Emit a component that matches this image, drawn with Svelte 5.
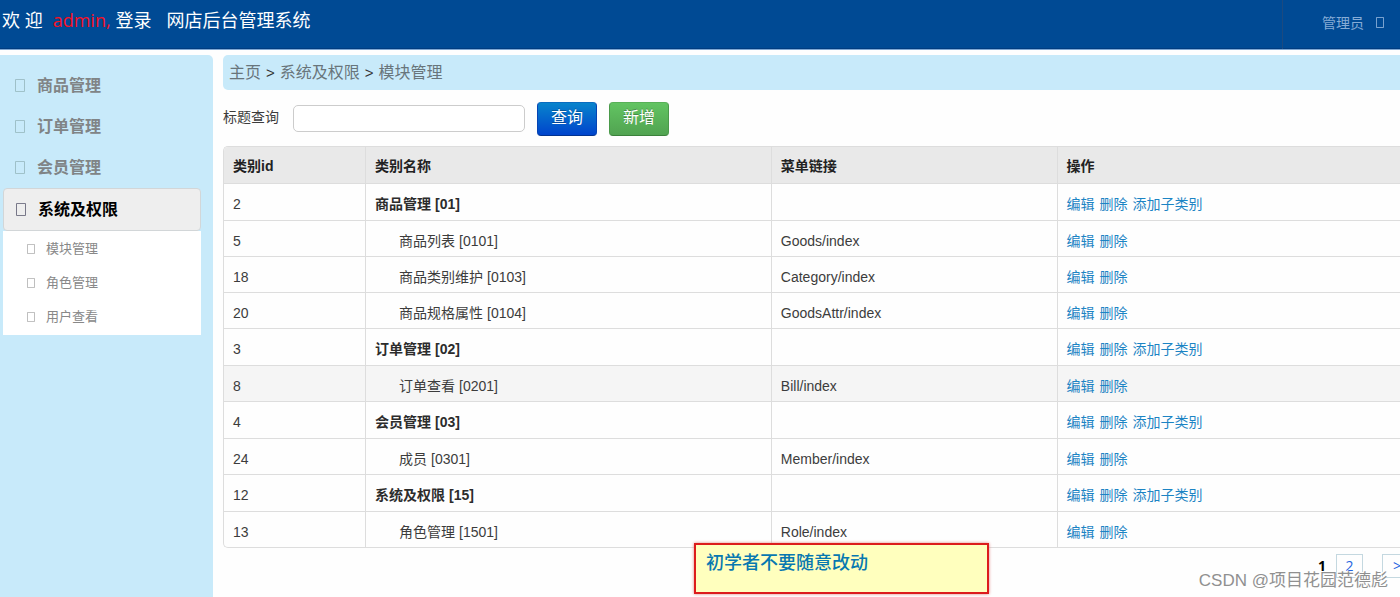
<script>
  const menu = ['商品管理', '订单管理', '会员管理'];
  const submenu = ['模块管理', '角色管理', '用户查看'];
  const rows = [
    { id: 2, name: '商品管理 [01]', link: '', parent: true },
    { id: 5, name: '商品列表 [0101]', link: 'Goods/index' },
    { id: 18, name: '商品类别维护 [0103]', link: 'Category/index' },
    { id: 20, name: '商品规格属性 [0104]', link: 'GoodsAttr/index' },
    { id: 3, name: '订单管理 [02]', link: '', parent: true },
    { id: 8, name: '订单查看 [0201]', link: 'Bill/index', active: true },
    { id: 4, name: '会员管理 [03]', link: '', parent: true },
    { id: 24, name: '成员 [0301]', link: 'Member/index' },
    { id: 12, name: '系统及权限 [15]', link: '', parent: true },
    { id: 13, name: '角色管理 [1501]', link: 'Role/index' }
  ];
  let query = $state('');
</script>

{#snippet box(cls)}
  <svg class="box {cls}" viewBox="0 0 10 14" preserveAspectRatio="none" aria-hidden="true">
    <rect x="0.5" y="0.5" width="9" height="13" fill="none" stroke="currentColor" vector-effect="non-scaling-stroke" />
  </svg>
{/snippet}

<div class="page">
  <header>
    <div class="welcome">
      <span>欢 迎</span><span class="user">admin,</span><span>登录</span><span class="title">网店后台管理系统</span>
    </div>
    <a class="account" href="#account">管理员 {@render box('tiny')}</a>
  </header>

  <div class="body">
    <aside>
      <nav>
        {#each menu as item}
          <a class="item" href="#menu">{@render box('')}{item}</a>
        {/each}
        <a class="item open" href="#menu">{@render box('')}系统及权限</a>
        <div class="sub">
          {#each submenu as item}
            <a href="#sub">{@render box('small')}{item}</a>
          {/each}
        </div>
      </nav>
    </aside>

    <main>
      <div class="crumbs">
        <a href="#home">主页</a><span>&gt;</span><a href="#system">系统及权限</a><span>&gt;</span><a href="#module">模块管理</a>
      </div>

      <form class="search" onsubmit={(e) => e.preventDefault()}>
        <label for="q">标题查询</label>
        <input id="q" type="text" bind:value={query} />
        <button class="primary" type="submit">查询</button>
        <button class="success" type="button">新增</button>
      </form>

      <table>
        <colgroup><col class="c1" /><col class="c2" /><col class="c3" /><col /></colgroup>
        <thead>
          <tr><th>类别id</th><th>类别名称</th><th>菜单链接</th><th>操作</th></tr>
        </thead>
        <tbody>
          {#each rows as row}
            <tr class:parent={row.parent} class:active={row.active}>
              <td>{row.id}</td>
              <td class="name">{row.name}</td>
              <td>{row.link}</td>
              <td>
                <div class="ops">
                  <a href="#edit">编辑</a><a href="#delete">删除</a>
                  {#if row.parent}<a href="#add">添加子类别</a>{/if}
                </div>
              </td>
            </tr>
          {/each}
        </tbody>
      </table>

      <div class="pager">
        <span class="current">1</span><a class="two" href="#p2">2</a><a class="next" href="#next">&gt;</a>
      </div>
    </main>
  </div>

  <div class="note">初学者不要随意改动</div>
  <div class="mark">CSDN @项目花园范德彪</div>
</div>

<style>
  :global(body) { margin: 0; background: #fefefe; }
  * { box-sizing: border-box; }
  a { text-decoration: none; color: inherit; }
  .page {
    position: relative;
    height: 100vh;
    overflow: hidden;
    display: flex;
    flex-direction: column;
    gap: 5px;
    font: 14px/20px "Liberation Sans", "Noto Sans CJK SC", sans-serif;
    color: #3c3c3c;
  }
  header {
    flex: none;
    height: 50px;
    display: flex;
    justify-content: space-between;
    background: #004a94;
    border-bottom: 1px solid #7fa8d4;
    box-shadow: inset 0 -1px #003c80;
  }
  .welcome {
    display: flex;
    padding: 7px 2px;
    font: 18px/26px "Open Sans", "Noto Sans CJK SC", sans-serif;
    color: #fff;
  }
  .user { color: #f81024; margin: 0 5px 0 10px; }
  .title { margin-left: 15px; }
  .account {
    display: flex;
    align-items: center;
    gap: 12px;
    padding: 0 16px 4px 39px;
    border-left: 1px solid #1c4a80;
    color: #86acd6;
  }
  .box { flex: none; width: 10px; height: 13px; color: #9ec0c8; }
  .tiny { width: 8px; height: 11px; color: #86acd6; }
  .small { width: 8px; height: 10px; color: #b8b8b8; }

  .body { flex: 1; display: flex; gap: 10px; min-height: 0; }
  aside {
    flex: none;
    width: 213px;
    background: #c8eafa;
    border-top-right-radius: 5px;
    padding: 10px 12px 0 3px;
  }
  .item {
    display: flex;
    align-items: center;
    gap: 12px;
    height: 41px;
    padding-left: 12px;
    font-size: 16px;
    font-weight: bold;
    color: #808486;
  }
  .open {
    height: 43px;
    background: #eee;
    border: 1px solid #d2d6d8;
    border-radius: 4px;
    color: #000;
  }
  .open .box { color: #777788; }
  .sub { background: #fff; padding: 1px 0; }
  .sub a {
    display: flex;
    align-items: center;
    gap: 11px;
    height: 34px;
    padding-left: 24px;
    font-size: 13px;
    color: #888;
  }

  main { flex: 1; min-width: 0; }
  .crumbs {
    display: flex;
    gap: 5px;
    height: 35px;
    padding: 0 6px;
    line-height: 36px;
    font-size: 16px;
    background: #c8eafa;
    border-radius: 5px 0 0 5px;
    color: #333;
  }
  .crumbs a { color: #68757b; }
  .crumbs span { font-size: 15px; }
  .search { display: flex; align-items: center; height: 56px; padding-top: 1px; }
  .search label { width: 70px; padding-bottom: 4px; }
  .search input {
    width: 232px;
    height: 27px;
    padding: 2px 6px;
    border: 1px solid #ccc;
    border-radius: 5px;
    background: #fff;
    font: inherit;
    color: inherit;
  }
  button {
    height: 34px;
    width: 60px;
    margin-left: 12px;
    padding: 0 0 2px;
    border-radius: 4px;
    border: 1px solid;
    font: 16px/24px "Liberation Sans", "Noto Sans CJK SC", sans-serif;
    color: #fff;
    text-shadow: 0 -1px rgba(0, 0, 0, 0.25);
  }
  .primary { background: linear-gradient(#0884cc, #0044cc); border-color: #0a6cc0 #0544b4 #02338f; }
  .success { background: linear-gradient(#62c462, #51a351); border-color: #58b058 #4a9a4a #3b813b; }

  table {
    width: 100%;
    table-layout: fixed;
    border-collapse: separate;
    border-spacing: 0;
    border: 1px solid #ddd;
    border-right: 0;
    border-radius: 5px 0 0 5px;
    overflow: hidden;
  }
  .c1 { width: 12%; }
  .c2 { width: 34.5%; }
  .c3 { width: 24.3%; }
  th, td { padding: 4px 9px 0; text-align: left; white-space: nowrap; }
  th { height: 36px; padding-top: 2px; background: #e9e9e9; color: #222; }
  td { height: 36px; border-top: 1px solid #ddd; }
  th + th, td + td { border-left: 1px solid #ddd; }
  .parent td { height: 37px; }
  .name { padding-left: 33px; }
  .parent .name { padding-left: 9px; font-weight: bold; color: #2c2c2c; }
  .active td { background: #f5f5f5; }
  .ops { display: flex; gap: 5px; color: #1c84c4; }

  .pager {
    display: flex;
    justify-content: flex-end;
    margin-top: 6px;
    line-height: 22px;
    font-family: "Open Sans", sans-serif;
  }
  .pager a { height: 24px; border: 1px solid #c4d8e0; color: #2464e0; }
  .current { font-weight: bold; color: #000; margin: 1px 10px 0 0; }
  .two { width: 27px; text-align: center; margin-right: 19px; }
  .pager .next { width: 18px; padding-left: 10px; border-right: 0; overflow: hidden; }

  .note {
    position: absolute;
    left: 694px;
    bottom: 3px;
    width: 295px;
    height: 51px;
    padding: 3px 10px;
    border: 2px solid #dc1c1c;
    background: #ffffbe;
    box-shadow: 0 0 3px #e08080;
    font: 500 18px/26px "Noto Sans CJK SC", sans-serif;
    color: #0878b0;
  }
  .mark {
    position: absolute;
    right: 12px;
    bottom: 4px;
    font: 17px/24px "Liberation Sans", "Noto Sans CJK SC", sans-serif;
    color: #909090;
    text-shadow: -1px -1px #fff;
  }
</style>
